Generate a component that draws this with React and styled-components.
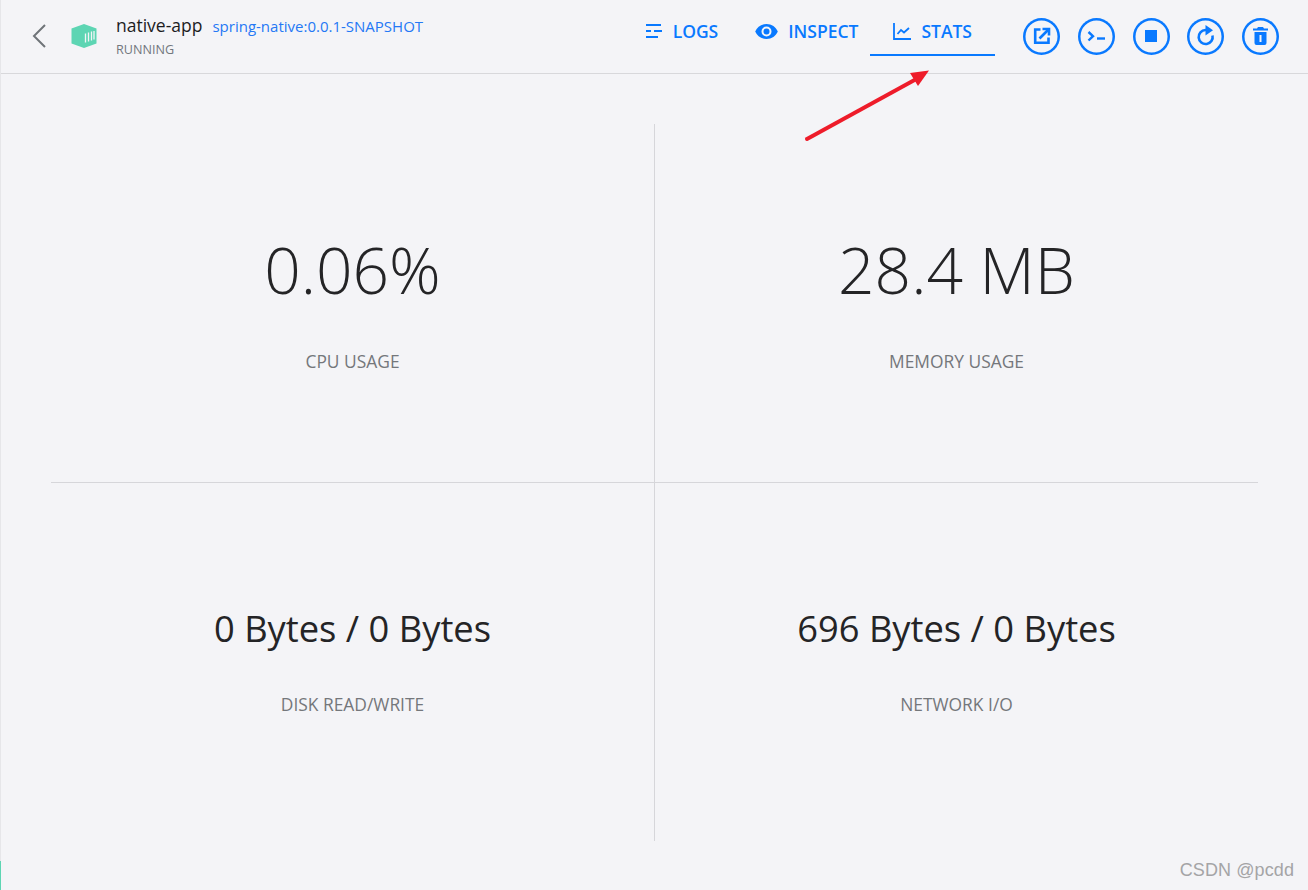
import styled, { createGlobalStyle } from 'styled-components';

const GlobalStyle = createGlobalStyle`
  html, body {
    margin: 0;
    padding: 0;
    background: #f4f4f7;
  }
  * {
    box-sizing: border-box;
  }
`;

const Page = styled.div`
  position: relative;
  height: 890px;
  border-left: 1px solid #e6e6e9;
  background: #f4f4f7;
  font-family: "Open Sans", "Liberation Sans", sans-serif;
`;

const Header = styled.header`
  display: flex;
  align-items: center;
  height: 74px;
  padding: 0 29px 1px 30px;
  border-bottom: 1px solid #d8d8db;
`;

const BackButton = styled.button`
  display: flex;
  width: 16px;
  height: 26px;
  padding: 0;
  margin-right: 24px;
  border: none;
  background: none;
  color: #6f7479;
`;

const ContainerIcon = styled.svg`
  flex-shrink: 0;
  width: 26px;
  height: 24px;
  margin-right: 19px;
`;

const TitleBlock = styled.div`
  display: flex;
  flex-direction: column;
  gap: 6px;
`;

const TitleRow = styled.div`
  display: flex;
  align-items: baseline;
  gap: 10px;
`;

const AppName = styled.span`
  font-size: 17.5px;
  line-height: 22px;
  color: #1c1c1e;
`;

const ImageName = styled.a`
  font-size: 15px;
  line-height: 20px;
  color: #2478f5;
`;

const Status = styled.span`
  font-size: 12.6px;
  line-height: 16px;
  color: #72777d;
`;

const Tabs = styled.nav`
  display: flex;
  align-self: stretch;
  margin-left: auto;
  margin-right: 28px;
`;

const Tab = styled.a`
  display: flex;
  align-items: center;
  gap: 10px;
  height: 56px;
  padding: 8px ${(p) => (p.$active ? '23px' : '0')} 0;
  margin-left: ${(p) => (p.$active ? '12px' : '37px')};
  border-bottom: 2px solid ${(p) => (p.$active ? '#0979ff' : 'transparent')};
  font-size: 17.5px;
  font-weight: 600;
  color: #0979ff;
`;

const Actions = styled.div`
  display: flex;
  gap: 17.75px;
`;

const ActionButton = styled.button`
  display: flex;
  align-items: center;
  justify-content: center;
  width: 37px;
  height: 37px;
  padding: 0;
  border: none;
  border-radius: 50%;
  box-shadow: inset 0 0 0 2.5px #0979ff;
  background: none;
  color: #0979ff;
`;

const StatsGrid = styled.main`
  display: grid;
  grid-template-columns: 604px 603px;
  grid-template-rows: 359px 358px;
  margin: 50px 0 0 50px;
`;

const StatCell = styled.section`
  display: flex;
  flex-direction: column;
  align-items: center;
  justify-content: center;
  border-right: ${(p) => (p.$right ? 'none' : '1px solid #d6d6da')};
  border-bottom: ${(p) => (p.$bottom ? 'none' : '1px solid #d6d6da')};
  padding-bottom: ${(p) => (p.$bottom ? '5px' : '9px')};
`;

const StatValue = styled.div`
  font-size: ${(p) => (p.$large ? '64px' : '36.3px')};
  font-weight: ${(p) => (p.$large ? 300 : 400)};
  line-height: ${(p) => (p.$large ? '88px' : '46px')};
  margin-bottom: ${(p) => (p.$large ? '36px' : '42px')};
  color: #242426;
`;

const StatLabel = styled.div`
  font-size: 17.4px;
  line-height: 22px;
  color: #74777b;
`;

const Annotation = styled.svg`
  position: absolute;
  left: 799px;
  top: 65px;
  width: 135px;
  height: 82px;
`;

const SideMark = styled.div`
  position: absolute;
  left: -1px;
  bottom: 0;
  width: 1px;
  height: 29px;
  background: #5dd5b3;
`;

const Watermark = styled.div`
  position: absolute;
  right: 14px;
  bottom: 8px;
  font-family: "Liberation Sans", Arial, sans-serif;
  font-size: 18px;
  line-height: 24px;
  letter-spacing: 0.1px;
  color: #a4a4a6;
`;

const LogsIcon = () => (
  <svg width="18" height="16" viewBox="0 0 18 16" fill="none" stroke="currentColor" strokeWidth="2">
    <path d="M1 2h15M1 8h5M9 8h8M1 14h12" />
  </svg>
);

const EyeIcon = () => (
  <svg width="23" height="15" viewBox="0 0 23 15" fill="currentColor">
    <path fillRule="evenodd" d="M11.5 0C6.3 0 2 3 .2 7.500 2 12 6.300 15 11.500 15s9.500-3 11.300-7.500C21 3 16.700 0 11.500 0zm0 12.500a5 5 0 1 1 0-10 5 5 0 0 1 0 10zm0-8a3 3 0 1 0 0 6 3 3 0 0 0 0-6z" />
  </svg>
);

const StatsIcon = () => (
  <svg width="18" height="17" viewBox="0 0 18 17" fill="none" stroke="currentColor" strokeWidth="1.8">
    <path d="M1 0v16h17" />
    <path d="M4.500 11l3.500-4 3 2.500L16 5" />
  </svg>
);

const OpenIcon = () => (
  <svg width="20" height="20" viewBox="0 0 20 20" fill="none" stroke="currentColor" strokeWidth="2.600">
    <path d="M8.500 3.500H3.200v13.300h13.300v-5.300" />
    <path d="M7.500 12.500L16 4" />
    <path d="M10.500 3h6.500v6.500" />
  </svg>
);

const TerminalIcon = () => (
  <svg width="18" height="11" viewBox="0 0 18 11" fill="none" stroke="currentColor" strokeWidth="2.400">
    <path d="M1.500 1l4.500 4.200-4.500 4.300" />
    <path d="M10 7.500h8" />
  </svg>
);

const StopIcon = () => (
  <svg width="12" height="12" viewBox="0 0 12 12" fill="currentColor">
    <rect width="12" height="12" />
  </svg>
);

const ReloadIcon = () => (
  <svg width="20" height="23" viewBox="0 0 20 23" fill="none">
    <path d="M16.500 10.500a7 7 0 1 1-7-5.500h2" stroke="currentColor" strokeWidth="2.600" />
    <path d="M9.500 0l7.500 5.200-7.500 5.200z" fill="currentColor" />
  </svg>
);

const TrashIcon = () => (
  <svg width="15" height="18" viewBox="0 0 15 18" fill="currentColor">
    <path d="M5 0h5l1 1.500h4v2H0v-2h4zM1.500 5h12v11a2 2 0 0 1-2 2h-8a2 2 0 0 1-2-2zm5 3v7h2V8z" fillRule="evenodd" />
  </svg>
);

const stats = [
  { label: 'CPU USAGE', value: '0.06%', large: true },
  { label: 'MEMORY USAGE', value: '28.4 MB', large: true, right: true },
  { label: 'DISK READ/WRITE', value: '0 Bytes / 0 Bytes', bottom: true },
  { label: 'NETWORK I/O', value: '696 Bytes / 0 Bytes', right: true, bottom: true },
];

const App = () => {
  return (
    <Page>
      <GlobalStyle />
      <Header>
        <BackButton>
          <svg width="16" height="26" viewBox="0 0 16 26" fill="none" stroke="currentColor" strokeWidth="2">
            <path d="M14 2L3 13l11 11" />
          </svg>
        </BackButton>
        <ContainerIcon viewBox="0 0 26 24">
          <path d="M13 0l12.500 4.500v15L13 24 .5 19.500v-15z" fill="#5dd5b3" />
          <path d="M14.500 18.500v-9M17.500 17.500v-9M20.500 16.500v-9M23 15.500V7" stroke="#f4f4f7" strokeWidth="1.300" />
        </ContainerIcon>
        <TitleBlock>
          <TitleRow>
            <AppName>native-app</AppName>
            <ImageName>spring-native:0.0.1-SNAPSHOT</ImageName>
          </TitleRow>
          <Status>RUNNING</Status>
        </TitleBlock>
        <Tabs>
          <Tab><LogsIcon />LOGS</Tab>
          <Tab><EyeIcon />INSPECT</Tab>
          <Tab $active><StatsIcon />STATS</Tab>
        </Tabs>
        <Actions>
          <ActionButton><OpenIcon /></ActionButton>
          <ActionButton><TerminalIcon /></ActionButton>
          <ActionButton><StopIcon /></ActionButton>
          <ActionButton><ReloadIcon /></ActionButton>
          <ActionButton><TrashIcon /></ActionButton>
        </Actions>
      </Header>
      <StatsGrid>
        {stats.map((s) => (
          <StatCell key={s.label} $right={s.right} $bottom={s.bottom}>
            <StatValue $large={s.large}>{s.value}</StatValue>
            <StatLabel>{s.label}</StatLabel>
          </StatCell>
        ))}
      </StatsGrid>
      <Annotation viewBox="0 0 135 82">
        <path d="M7 74L120 12" stroke="#ee1c2a" strokeWidth="4" strokeLinecap="round" fill="none" />
        <path d="M129 5.500L110 8l8 13z" fill="#ee1c2a" />
      </Annotation>
      <SideMark />
      <Watermark>CSDN @pcdd</Watermark>
    </Page>
  );
};

export default App;
